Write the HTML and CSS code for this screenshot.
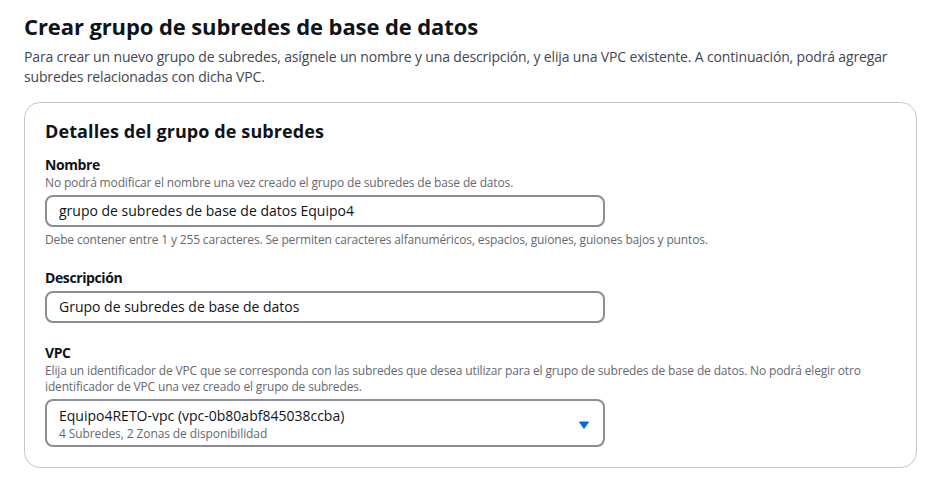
FILE: index.html
```html
<!DOCTYPE html>
<html lang="es">
<head>
<meta charset="utf-8">
<title>Crear grupo de subredes de base de datos</title>
<link rel="stylesheet" href="styles.css">
</head>
<body>
<main class="page">
  <header class="page-header">
    <h1 class="title">Crear grupo de subredes de base de datos</h1>
    <p class="intro">Para crear un nuevo grupo de subredes, asígnele un nombre y una descripción, y elija una VPC existente. A continuación, podrá agregar subredes relacionadas con dicha VPC.</p>
  </header>
  <section class="card">
    <h2 class="card-title">Detalles del grupo de subredes</h2>
    <div class="field">
      <div class="label">Nombre</div>
      <div class="desc">No podrá modificar el nombre una vez creado el grupo de subredes de base de datos.</div>
      <div class="input">grupo de subredes de base de datos Equipo4</div>
      <div class="hint">Debe contener entre 1 y 255 caracteres. Se permiten caracteres alfanuméricos, espacios, guiones, guiones bajos y puntos.</div>
    </div>
    <div class="field">
      <div class="label">Descripción</div>
      <div class="input">Grupo de subredes de base de datos</div>
    </div>
    <div class="field">
      <div class="label">VPC</div>
      <div class="desc">Elija un identificador de VPC que se corresponda con las subredes que desea utilizar para el grupo de subredes de base de datos. No podrá elegir otro identificador de VPC una vez creado el grupo de subredes.</div>
      <div class="select">
        <div class="select-text">
          <div class="select-main">Equipo4RETO-vpc (vpc-0b80abf845038ccba)</div>
          <div class="select-sub">4 Subredes, 2 Zonas de disponibilidad</div>
        </div>
        <svg class="caret" width="10" height="8" viewBox="0 0 10 8"><path d="M0.5 1 L9.5 1 L5 7.5 Z" fill="#006ce0" stroke="#006ce0" stroke-width="1" stroke-linejoin="round"/></svg>
      </div>
    </div>
  </section>
</main>
</body>
</html>
```

FILE: styles.css
```css
* { box-sizing: border-box; }
html, body { margin: 0; padding: 0; background: #ffffff; }
body {
  font-family: "Open Sans", "Noto Sans", "Liberation Sans", sans-serif;
  color: #0f141a;
}
.page { padding: 11px 16px 0 24px; }
.page-header { margin-bottom: 15px; }
.title {
  margin: 0;
  font-size: 22px;
  line-height: 30px;
  font-weight: 700;
  letter-spacing: -0.1px;
}
.intro {
  margin: 6px 0 0;
  font-size: 14px;
  line-height: 20px;
  color: #424650;
  letter-spacing: -0.15px;
}
.card {
  border: 1px solid #c6c6cd;
  border-radius: 16px;
  padding: 16px 20px 20px;
}
.card-title {
  margin: 0 0 12px;
  font-size: 18px;
  line-height: 24px;
  font-weight: 700;
  letter-spacing: 0.1px;
}
.field { margin-bottom: 20px; }
.field:last-child { margin-bottom: 0; }
.label {
  font-size: 14px;
  line-height: 20px;
  font-weight: 700;
  letter-spacing: -0.4px;
}
.label + .input { margin-top: 3px; }
.desc, .hint {
  font-size: 12px;
  line-height: 16px;
  color: #656871;
  letter-spacing: -0.15px;
}
.desc { margin-bottom: 4px; }
.hint { margin-top: 5px; }
.input {
  width: 560px;
  height: 32px;
  border: 2px solid #8c8c94;
  border-radius: 8px;
  padding: 0 12px;
  font-size: 14px;
  line-height: 28px;
  color: #0f141a;
}
.select {
  width: 560px;
  height: 48px;
  border: 2px solid #8c8c94;
  border-radius: 8px;
  padding: 3px 12px 0 12px;
  display: flex;
  align-items: center;
  justify-content: space-between;
}
.select-text { display: flex; flex-direction: column; }
.select-main { font-size: 14px; line-height: 18px; }
.select-sub { font-size: 12px; line-height: 18px; color: #656871; letter-spacing: -0.1px; }
.caret { margin-right: 2px; }
```
